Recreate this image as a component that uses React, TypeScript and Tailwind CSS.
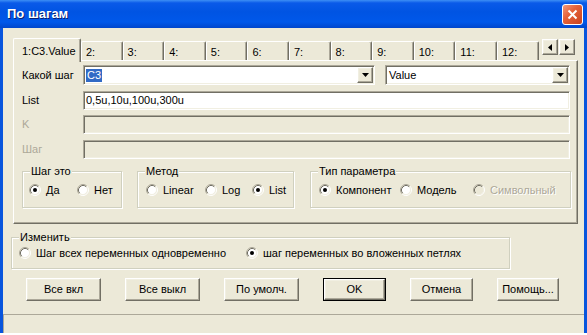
import React from "react";

const sunken =
  "border border-t-[#aca899] border-l-[#aca899] border-b-white border-r-white shadow-[inset_1px_1px_0_#716f64,inset_-1px_-1px_0_#f1efe2]";
const raised =
  "border border-t-white border-l-white border-b-[#716f64] border-r-[#716f64] shadow-[inset_-1px_-1px_0_#aca899,inset_1px_1px_0_#f1efe2]";

function RadioCircle({ checked, disabled }: { checked?: boolean; disabled?: boolean }) {
  return (
    <svg width="12" height="12" viewBox="0 0 12 12" className="shrink-0">
      <circle cx="6" cy="6" r="4.5" fill={disabled ? "#ece9d8" : "#ffffff"} />
      <path d="M2.11 9.89 A5.5 5.5 0 0 1 9.89 2.11" stroke="#aca899" fill="none" />
      <path d="M9.89 2.11 A5.5 5.5 0 0 1 2.11 9.89" stroke="#ffffff" fill="none" />
      <path d="M2.82 9.18 A4.5 4.5 0 0 1 9.18 2.82" stroke="#716f64" fill="none" />
      <path d="M9.18 2.82 A4.5 4.5 0 0 1 2.82 9.18" stroke="#f1efe2" fill="none" />
      {checked && <circle cx="6" cy="6" r="2" fill="#000000" />}
    </svg>
  );
}

function Radio({
  label,
  checked,
  disabled,
  w,
}: {
  label: string;
  checked?: boolean;
  disabled?: boolean;
  w?: string;
}) {
  return (
    <div className={`flex items-center h-[14px] shrink-0 ${w ?? ""}`}>
      <RadioCircle checked={checked} disabled={disabled} />
      <span
        className={`ml-[5px] whitespace-nowrap ${
          disabled ? "text-[#aca899] [text-shadow:1px_1px_0_#ffffff]" : "text-black"
        }`}
      >
        {label}
      </span>
    </div>
  );
}

function Group({
  label,
  className,
  children,
}: {
  label: string;
  className: string;
  children: React.ReactNode;
}) {
  return (
    <div
      className={`relative border border-[#d0d0bf] shadow-[inset_1px_1px_0_#ffffff,1px_1px_0_#ffffff] ${className}`}
    >
      <span className="absolute left-[7px] -top-[8px] px-[1px] bg-[#ece9d8] leading-[14px] whitespace-nowrap">
        {label}
      </span>
      {children}
    </div>
  );
}

function DropArrow() {
  return (
    <div className={`w-[16px] h-[16px] mr-[1px] shrink-0 bg-[#ece9d8] flex items-center justify-center ${raised}`}>
      <svg width="7" height="4" viewBox="0 0 7 4">
        <polygon points="0,0 7,0 3.5,4" fill="#000" />
      </svg>
    </div>
  );
}

function Combo({ w, children }: { w: string; children: React.ReactNode }) {
  return (
    <div className={`flex items-center h-[20px] bg-white ${sunken} ${w}`}>
      <div className="flex-1 pl-[2px] flex items-center">{children}</div>
      <DropArrow />
    </div>
  );
}

function Field({ text, disabled }: { text?: string; disabled?: boolean }) {
  return (
    <div
      className={`flex items-center h-[19px] w-[487px] pl-[2px] ${sunken} ${
        disabled ? "bg-[#ece9d8]" : "bg-white"
      }`}
    >
      {text}
    </div>
  );
}

function Button({ label, w, def }: { label: string; w: string; def?: boolean }) {
  if (def) {
    return (
      <div className={`h-[23px] border border-black ${w}`}>
        <div className={`h-full flex items-center justify-center ${raised}`}>{label}</div>
      </div>
    );
  }
  return <div className={`h-[23px] flex items-center justify-center ${raised} ${w}`}>{label}</div>;
}

const tabs = ["2:", "3:", "4:", "5:", "6:", "7:", "8:", "9:", "10:", "11:", "12:"];

export default function App() {
  return (
    <div className="w-[587px] h-[335px] bg-white font-['Liberation_Sans',Arial,sans-serif] text-[11px] text-black overflow-hidden">
      <div className="h-[333px] flex flex-col">
        {/* Title bar */}
        <div className="h-[28px] shrink-0 flex items-center justify-between pl-[7px] pr-[4px] bg-[linear-gradient(to_bottom,#3d8ff5_0px,#0a5ae8_3px,#0054e3_12px,#0058ea_22px,#0046cc_28px)]">
          <span className="text-white font-bold text-[13px] [text-shadow:1px_1px_0_#0a1f6e]">По шагам</span>
          <div className="w-[21px] h-[21px] rounded-[3px] border border-white bg-[linear-gradient(135deg,#f39a7c_0%,#e5623a_40%,#c9431f_100%)] flex items-center justify-center">
            <svg width="11" height="11" viewBox="0 0 11 11">
              <path d="M1.5 1.5 L9.5 9.5 M9.5 1.5 L1.5 9.5" stroke="#ffffff" strokeWidth="2" />
            </svg>
          </div>
        </div>

        {/* Body */}
        <div className="flex-1 flex flex-col bg-[#ece9d8] border-x-[3px] border-[#0855dd]">
          <div className="pt-[10px] pl-[10px]">
            {/* Tabs row */}
            <div className="flex items-end h-[22px] w-[565px]">
              <div className="relative z-10 -mb-[2px] h-[24px] w-[68px] shrink-0 bg-[#ece9d8] border-t border-l border-t-white border-l-white border-r border-r-[#716f64] shadow-[inset_-1px_0_0_#aca899] rounded-t-[2px] pl-[8px] pt-[4px]">
                1:C3.Value
              </div>
              {tabs.map((t) => (
                <div
                  key={t}
                  className="h-[19px] w-[41.6px] shrink-0 border-t border-l border-t-white border-l-white border-r border-r-[#716f64] shadow-[inset_-1px_0_0_#aca899] rounded-t-[2px] pl-[4px] pt-[2px]"
                >
                  {t}
                </div>
              ))}
              <div className="ml-auto mr-[3px] self-start mt-[1px] flex">
                <div className={`w-[16px] h-[16px] flex items-center justify-center ${raised}`}>
                  <svg width="4" height="7" viewBox="0 0 4 7">
                    <polygon points="4,0 4,7 0,3.5" fill="#000" />
                  </svg>
                </div>
                <div className={`w-[16px] h-[16px] ml-[1px] flex items-center justify-center ${raised}`}>
                  <svg width="4" height="7" viewBox="0 0 4 7">
                    <polygon points="0,0 0,7 4,3.5" fill="#000" />
                  </svg>
                </div>
              </div>
            </div>

            {/* Panel */}
            <div className="w-[565px] h-[164px] border border-t-white border-l-white border-b-[#716f64] border-r-[#716f64] shadow-[inset_-1px_-1px_0_#aca899] pt-[4px] pl-[8px]">
              <div className="flex items-center h-[20px]">
                <div className="w-[61px]">Какой шаг</div>
                <Combo w="w-[292px]">
                  <span className="bg-[#316ac5] text-white px-[1px] leading-[13px]">C3</span>
                </Combo>
                <div className="ml-[10px]">
                  <Combo w="w-[185px]">
                    <span className="pl-[1px]">Value</span>
                  </Combo>
                </div>
              </div>
              <div className="flex items-center mt-[6px]">
                <div className="w-[61px]">List</div>
                <Field text="0,5u,10u,100u,300u" />
              </div>
              <div className="flex items-center mt-[5px]">
                <div className="w-[61px] text-[#aca899]">K</div>
                <Field disabled />
              </div>
              <div className="flex items-center mt-[6px]">
                <div className="w-[61px] text-[#aca899]">Шаг</div>
                <Field disabled />
              </div>

              <div className="flex mt-[12px]">
                <Group label="Шаг это" className="w-[100px] h-[37px] pt-[11px] pl-[6px] flex">
                  <Radio label="Да" checked w="w-[48px]" />
                  <Radio label="Нет" />
                </Group>
                <Group label="Метод" className="ml-[15px] w-[157px] h-[37px] pt-[11px] pl-[8px] flex">
                  <Radio label="Linear" w="w-[59px]" />
                  <Radio label="Log" w="w-[47px]" />
                  <Radio label="List" checked />
                </Group>
                <Group label="Тип параметра" className="ml-[16px] w-[261px] h-[37px] pt-[11px] pl-[8px] flex">
                  <Radio label="Компонент" checked w="w-[81px]" />
                  <Radio label="Модель" w="w-[73px]" />
                  <Radio label="Символьный" disabled />
                </Group>
              </div>
            </div>
          </div>

          {/* Изменить */}
          <div className="pl-[8px] mt-[13px]">
            <Group label="Изменить" className="w-[499px] h-[32px] pt-[8px] pl-[7px] flex">
              <Radio label="Шаг всех переменных одновременно" w="w-[227px]" />
              <Radio label="шаг переменных во вложенных петлях" checked />
            </Group>
          </div>

          {/* Buttons */}
          <div className="flex gap-[24px] pl-[23px] mt-[9px]">
            <Button label="Все вкл" w="w-[75px]" />
            <Button label="Все выкл" w="w-[75px]" />
            <Button label="По умолч." w="w-[75px]" />
            <Button label="OK" w="w-[63px]" def />
            <Button label="Отмена" w="w-[63px]" />
            <Button label="Помощь..." w="w-[62px]" />
          </div>

          {/* Status area */}
          <div className="flex-1 mt-[13px] border-t border-l border-[#aca899]" />
        </div>
      </div>
    </div>
  );
}
